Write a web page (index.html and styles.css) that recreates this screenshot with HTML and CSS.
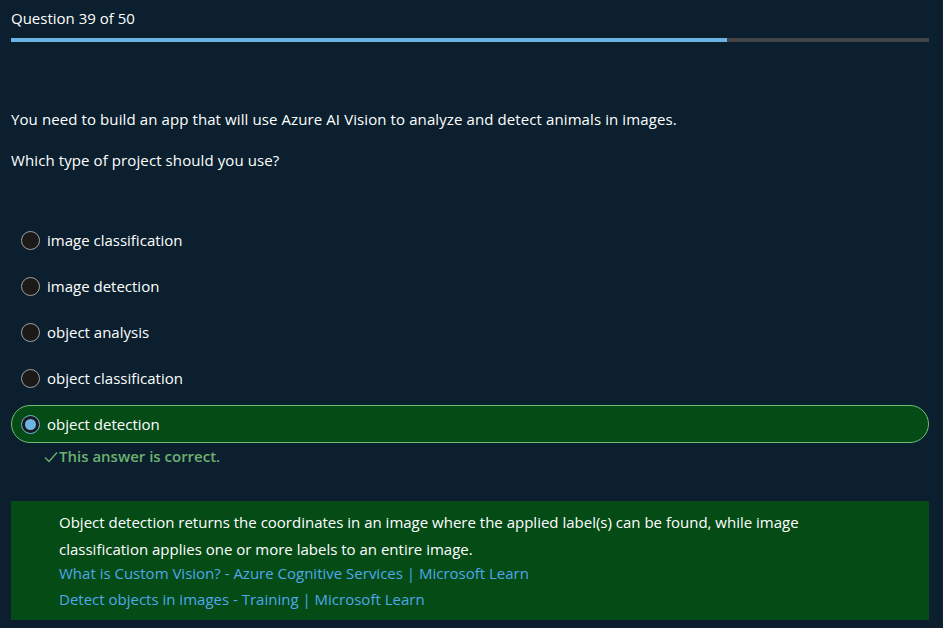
FILE: index.html
```html
<!DOCTYPE html>
<html lang="en">
<head>
<meta charset="utf-8">
<title>Question 39 of 50</title>
<link rel="stylesheet" href="styles.css">
</head>
<body>
<main class="quiz">
  <header class="quiz-head">
    <div class="counter">Question 39 of 50</div>
    <div class="progress"><div class="progress-fill" style="width: 78%"></div></div>
  </header>

  <section class="question">
    <p>You need to build an app that will use Azure AI Vision to analyze and detect animals in images.</p>
    <p>Which type of project should you use?</p>
  </section>

  <ul class="options">
    <li class="option"><span class="radio"></span><span>image classification</span></li>
    <li class="option"><span class="radio"></span><span>image detection</span></li>
    <li class="option"><span class="radio"></span><span>object analysis</span></li>
    <li class="option"><span class="radio"></span><span>object classification</span></li>
    <li class="option selected"><span class="radio checked"></span><span>object detection</span></li>
  </ul>

  <div class="verdict">
    <svg class="check" width="14" height="12" viewBox="0 0 14 12"><path d="M1 6.5 L5 10.5 L13 1.5" fill="none" stroke="currentColor" stroke-width="1.3"/></svg>
    <span>This answer is correct.</span>
  </div>

  <div class="explain">
    <p>Object detection returns the coordinates in an image where the applied label(s) can be found, while image classification applies one or more labels to an entire image.</p>
    <a href="#">What is Custom Vision? - Azure Cognitive Services | Microsoft Learn</a>
    <a href="#">Detect objects in images - Training | Microsoft Learn</a>
  </div>
</main>
</body>
</html>
```

FILE: styles.css
```css
* { box-sizing: border-box; }
html, body {
  margin: 0;
  background: #0b1f2e;
}
body {
  font-family: "Open Sans", "Noto Sans", sans-serif;
  font-size: 15px;
  color: #ffffff;
}
.quiz {
  padding: 8px 14px 0 11px;
}
.counter {
  font-size: 15px;
  line-height: 20px;
}
.progress {
  margin-top: 10px;
  height: 4px;
  background: #444444;
}
.progress-fill {
  height: 100%;
  background: #6cb4e4;
}
.question {
  margin-top: 67px;
}
.question p {
  margin: 0 0 21px;
  line-height: 20px;
  letter-spacing: 0.1px;
}
.options {
  list-style: none;
  margin: 51px 0 0;
  padding: 0;
  display: flex;
  flex-direction: column;
  gap: 8px;
}
.option {
  display: flex;
  align-items: center;
  gap: 7px;
  height: 38px;
  padding: 0 9px;
  border: 1px solid transparent;
  border-radius: 19px;
}
.option.selected {
  background: #054b16;
  border-color: #6fbf73;
}
.radio {
  width: 19px;
  height: 19px;
  border-radius: 50%;
  background: #1b1a19;
  border: 1px solid #a19f9d;
  flex: none;
  display: flex;
  align-items: center;
  justify-content: center;
}
.radio.checked {
  border: 1px solid #6cb4e4;
  background: #1b1a19;
}
.radio.checked::after {
  content: "";
  width: 11px;
  height: 11px;
  border-radius: 50%;
  background: #6cb4e4;
}
.verdict {
  display: flex;
  align-items: center;
  gap: 1px;
  margin: 3px 0 0 33px;
  color: #6bb26f;
  font-weight: 600;
  height: 20px;
}
.check { margin-top: 1px; }
.explain {
  margin-top: 35px;
  background: #054b16;
  padding: 8px 60px 8px 48px;
}
.explain p {
  margin: 0 0 -3px;
  line-height: 27px;
}
.explain a {
  display: block;
  line-height: 26px;
  color: #4fa8e8;
  text-decoration: none;
}
```
